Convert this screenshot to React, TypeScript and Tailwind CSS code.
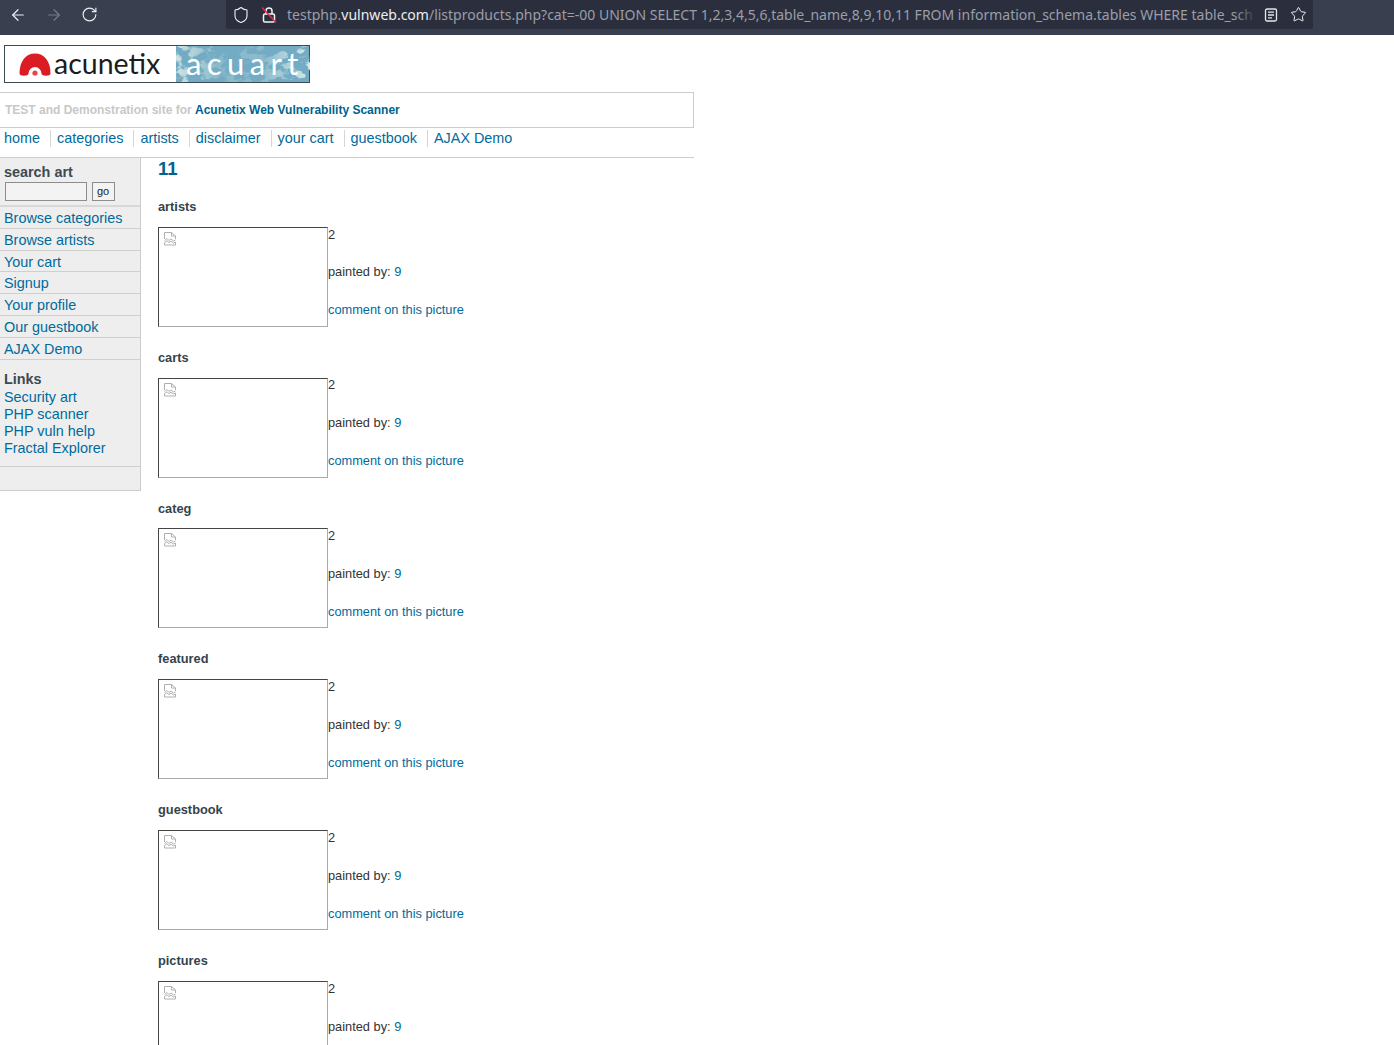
import { ArrowLeft, ArrowRight, RotateCw, Shield, Star } from 'lucide-react';

const NAV = ['home', 'categories', 'artists', 'disclaimer', 'your cart', 'guestbook', 'AJAX Demo'];
const MENU = ['Browse categories', 'Browse artists', 'Your cart', 'Signup', 'Your profile', 'Our guestbook', 'AJAX Demo'];
const LINKS = ['Security art', 'PHP scanner', 'PHP vuln help', 'Fractal Explorer'];
const TABLES = ['artists', 'carts', 'categ', 'featured', 'guestbook', 'pictures'];

function BrokenImage() {
  return (
    <svg width="14" height="15" viewBox="0 0 14 15" fill="none" stroke="#b0b0b0" strokeWidth="1" className="block">
      <path d="M1.5 8V1.5H8.5L12.5 5V8" />
      <path d="M8.5 1.5V5H12.5" />
      <path d="M1.5 9.5L4 7.5L6 9.5L8 8L10.5 10L12.5 9" />
      <path d="M1.5 11.5L4 9.8L6 11.5L8 10.2L10.5 12L12.5 11V14H1.5Z" />
    </svg>
  );
}

function LockIcon() {
  return (
    <svg width="16" height="18" viewBox="0 0 16 18" fill="none" className="block">
      <rect x="2.5" y="8" width="11" height="8" rx="1.5" stroke="#f4f4f6" strokeWidth="1.5" />
      <path d="M5 8V5a3 3 0 0 1 6 0v3" stroke="#f4f4f6" strokeWidth="1.5" />
      <path d="M1 1.5L15 16.5" stroke="#e22850" strokeWidth="1.5" />
    </svg>
  );
}

function ReaderIcon() {
  return (
    <svg width="14" height="14" viewBox="0 0 14 14" fill="none" stroke="#e6e6ea" strokeWidth="1.3" className="block">
      <rect x="1.5" y="1" width="11" height="12" rx="1.5" />
      <path d="M4 4.2H10M4 7H10M4 9.8H8" />
    </svg>
  );
}

function Logo() {
  return (
    <div className="flex h-[38px] w-[306px] border border-[#3c4a52] ml-1">
      <div className="w-[171px] bg-white flex items-center">
        <svg width="32" height="23" viewBox="0 0 32 23" className="ml-[14px] mt-px shrink-0">
          <path d="M0.5 20.5C0.5 8 7 0.5 16 0.5S31.5 8 31.5 20.5C31.5 23.5 22.5 23.5 22.5 20.5A6.5 6.5 0 0 0 9.5 20.5C9.5 23.5 0.5 23.5 0.5 20.5Z" fill="#dc1c24" />
          <circle cx="16" cy="20" r="2.6" fill="#e8434a" />
        </svg>
        <span className="ml-[3px] text-[28.5px] leading-none text-[#1c1c1c] font-['Lato',sans-serif] pb-px">acunetix</span>
      </div>
      <div className="relative flex-1 bg-[#72abc3]">
        <svg width="134" height="36" viewBox="0 0 134 36" className="absolute inset-0">
          <defs>
            <filter id="mottle">
              <feTurbulence type="fractalNoise" baseFrequency="0.08 0.12" numOctaves="4" seed="7" />
              <feColorMatrix values="0 0 0 0 0.68  0 0 0 0 0.82  0 0 0 0 0.80  0 0 0 7 -3.4" />
            </filter>
            <linearGradient id="calm" x1="0" x2="1" y1="0" y2="0">
              <stop offset="0" stopColor="#72abc3" stopOpacity="0.1" />
              <stop offset="0.3" stopColor="#72abc3" stopOpacity="0.75" />
              <stop offset="0.65" stopColor="#72abc3" stopOpacity="0.75" />
              <stop offset="1" stopColor="#72abc3" stopOpacity="0" />
            </linearGradient>
          </defs>
          <rect width="134" height="36" filter="url(#mottle)" />
          <rect width="134" height="36" fill="url(#calm)" />
        </svg>
        <span className="absolute left-[10px] top-0 text-[31px] leading-[34px] tracking-[5.4px] text-white font-['Lato',sans-serif] whitespace-nowrap">acuart</span>
      </div>
    </div>
  );
}

function Product({ title }: { title: string }) {
  return (
    <div className="h-[150.85px]">
      <h3 className="h-[21px] text-[12.8px] leading-[21px] font-bold text-[#33444c]">{title}</h3>
      <div className="flex mt-[9.8px]">
        <div className="w-[170px] h-[100px] border border-t-[#444] border-l-[#444] border-r-[#aaa] border-b-[#aaa] pt-[3px] pl-1 shrink-0">
          <BrokenImage />
        </div>
        <div className="text-[12.8px] leading-[15px] text-[#333]">
          <p className="-mt-[0.1px]">2</p>
          <p className="mt-[22.7px]">painted by: <a className="text-[#006a9b]">9</a></p>
          <p className="mt-[23px] text-[#006a9b]">comment on this picture</p>
        </div>
      </div>
    </div>
  );
}

export default function App() {
  return (
    <div className="h-[1045px] overflow-hidden bg-white font-['Liberation_Sans',Arial,sans-serif]">
      <div className="h-[35px] bg-[#3a3f50] flex items-start">
        <div className="w-[226px] h-[29px] flex items-center pl-[9px] gap-[18px] text-[#eceef2]">
          <ArrowLeft size={18} strokeWidth={1.6} />
          <ArrowRight size={18} strokeWidth={1.6} className="text-[#767b8a]" />
          <RotateCw size={17} strokeWidth={1.6} />
        </div>
        <div className="relative w-[1087px] h-[29px] bg-[#2b2f3d] rounded-b-[2px] flex items-center pl-[6px] overflow-hidden">
          <Shield size={18} strokeWidth={1.5} className="text-[#f0f0f4] shrink-0" />
          <div className="ml-[11px] shrink-0"><LockIcon /></div>
          <span className="ml-[10px] text-[14px] whitespace-nowrap text-[#9a9ea9] font-['Noto_Sans',sans-serif]">
            testphp.<span className="text-[#eceef2]">vulnweb.com</span>/listproducts.php?cat=-00 UNION SELECT 1,2,3,4,5,6,table_name,8,9,10,11 FROM information_schema.tables WHERE table_sch
          </span>
          <div className="absolute right-0 top-0 h-full w-[56px] bg-[#2b2f3d]" />
          <div className="absolute right-[56px] top-0 h-full w-[22px] bg-gradient-to-r from-transparent to-[#2b2f3d]" />
          <div className="absolute right-[35px] top-[8px]"><ReaderIcon /></div>
          <Star size={17} strokeWidth={1.4} className="absolute right-[6px] top-[6px] text-[#eef0f4]" />
        </div>
      </div>

      <div className="pt-[10px]">
        <Logo />
      </div>

      <div className="w-[694px] h-[36px] mt-[9px] border border-l-0 border-[#cccccc] flex items-center pl-[5px] text-[12px] font-bold text-[#c8c8c8] whitespace-nowrap">
        TEST and Demonstration site for&nbsp;<span className="text-[#00628f]">Acunetix Web Vulnerability Scanner</span>
      </div>

      <nav className="w-[694px] h-[30px] flex items-start pl-1 pt-[2px] text-[14.4px] leading-[17px] text-[#006a9b] border-b border-[#cccccc] whitespace-nowrap">
        {NAV.map((item, i) => (
          <a key={item} className={i === 0 ? 'pr-[10px]' : 'pl-[6px] pr-[10px] border-l border-[#d6d6d6]'}>{item}</a>
        ))}
      </nav>

      <div className="flex items-start">
        <aside className="w-[141px] h-[333px] bg-[#eeeeee] border-r border-b border-[#cccccc] shrink-0">
          <div className="h-[49px] border-b-2 border-[#d8d8d8] pl-1 pt-[6px]">
            <div className="text-[14.4px] leading-[16px] font-bold text-[#3c4b52]">search art</div>
            <div className="flex gap-[5px] ml-px mt-[2px]">
              <div className="w-[82px] h-[19px] bg-[#f3f3f3] border border-[#8d8d8d]" />
              <div className="w-[23px] h-[19px] bg-[#f3f3f3] border border-[#8d8d8d] pr-px text-[11px] leading-[16px] text-center text-[#222]">go</div>
            </div>
          </div>
          {MENU.map(item => (
            <div key={item} className="h-[21.8px] pl-1 pt-px border-b border-[#cfcfcf] text-[14.4px] leading-[20px] text-[#006a9b]">{item}</div>
          ))}
          <div className="h-[107px] pl-1 pt-[10px] border-b border-[#cfcfcf]">
            <div className="text-[14.4px] leading-[19px] font-bold text-[#3c4b52]">Links</div>
            {LINKS.map(item => (
              <div key={item} className="text-[14.4px] leading-[17.2px] text-[#006a9b]">{item}</div>
            ))}
          </div>
        </aside>

        <main className="pl-[17px]">
          <h2 className="h-[37.9px] text-[18.5px] leading-[22px] font-bold text-[#00628f]">11</h2>
          {TABLES.map(t => (
            <Product key={t} title={t} />
          ))}
        </main>
      </div>
    </div>
  );
}
